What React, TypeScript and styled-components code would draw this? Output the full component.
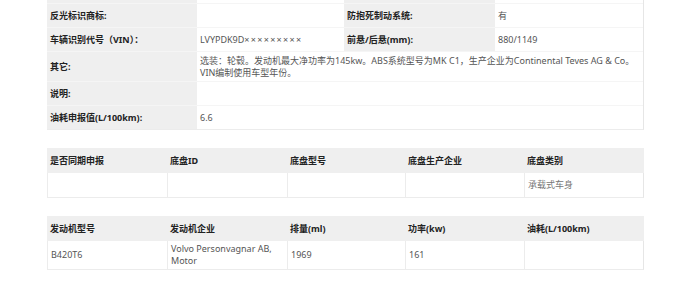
import React from "react";
import styled, { createGlobalStyle } from "styled-components";

const GlobalStyle = createGlobalStyle`
  html, body {
    margin: 0;
    padding: 0;
    background: #ffffff;
  }
  body {
    font-family: "Noto Sans", "Noto Sans CJK SC", sans-serif;
    font-size: 9px;
    color: #555;
  }
`;

type Pair = { label: string; value: React.ReactNode };
type SpecRowData = { cells: Pair[]; tall?: boolean; span?: boolean };

const getSpecRows = (): SpecRowData[] => [
    { cells: [{ label: "反光标识商标:", value: "" }, { label: "防抱死制动系统:", value: "有" }] },
    { cells: [{ label: "车辆识别代号（VIN）：", value: (<>LVYPDK9D<Masked>×××××××××</Masked></>) }, { label: "前悬/后悬(mm):", value: "880/1149" }] },
    {
        cells: [{
            label: "其它:",
            value: (<>选装：轮毂。发动机最大净功率为145kw。ABS系统型号为MK C1，生产企业为Continental Teves AG &amp; Co。<br />VIN编制使用车型年份。</>),
        }],
        tall: true,
        span: true,
    },
    { cells: [{ label: "说明:", value: "" }], span: true },
    { cells: [{ label: "油耗申报值(L/100km):", value: "6.6" }], span: true },
];

const chassis = {
    head: ["是否同期申报", "底盘ID", "底盘型号", "底盘生产企业", "底盘类别"],
    body: ["", "", "", "", "承载式车身"],
};

const engine = {
    head: ["发动机型号", "发动机企业", "排量(ml)", "功率(kw)", "油耗(L/100km)"],
    body: ["B420T6", "Volvo Personvagnar AB,\nMotor", "1969", "161", ""],
};

const App = () => {
    const specRows = getSpecRows();
    return (
        <>
            <GlobalStyle />
            <Page>
                <SpecTable>
                    {/* row scrolled mostly out of view */}
                    <SpecRow>
                        <Label />
                        <Value />
                        <Label />
                        <Value />
                    </SpecRow>
                    {specRows.map((row, i) => (
                        <SpecRow key={i} $tall={row.tall}>
                            {row.cells.map((c, j) => (
                                <React.Fragment key={j}>
                                    <Label>{c.label}</Label>
                                    <Value $span={row.span}>{c.value}</Value>
                                </React.Fragment>
                            ))}
                        </SpecRow>
                    ))}
                </SpecTable>

                <GridTable>
                    {chassis.head.map((h) => (<HeadCell key={h}>{h}</HeadCell>))}
                    {chassis.body.map((b, i) => (<BodyCell key={i} $h={24} $muted={i === 4}>{b}</BodyCell>))}
                </GridTable>

                <GridTable>
                    {engine.head.map((h) => (<HeadCell key={h}>{h}</HeadCell>))}
                    {engine.body.map((b, i) => (<BodyCell key={i} $h={28}>{b}</BodyCell>))}
                </GridTable>
            </Page>
        </>
    );
};

const Page = styled('div')`
  width: 597px;
  margin-left: 47px;
  margin-top: -20px;
  display: flex;
  flex-direction: column;
  gap: 18px;
`

const SpecTable = styled('div')`
  display: flex;
  flex-direction: column;
  border-right: 1px solid #e6e6e6;
  border-bottom: 1px solid #ececec;
`

const SpecRow = styled('div')<{ $tall?: boolean }>`
  display: grid;
  grid-template-columns: 150px 147px 151px 148px;
  height: ${(p) => (p.$tall ? "29px" : "23px")};
  border-bottom: 1px solid #f5f5f5;
  &:last-child {
    border-bottom: none;
  }
`

const Label = styled('div')`
  display: flex;
  align-items: center;
  padding-left: 3px;
  background: #efefef;
  color: #222;
  font-weight: 700;
  white-space: nowrap;
`

const Value = styled('div')<{ $span?: boolean }>`
  display: flex;
  align-items: center;
  padding-left: 3px;
  background: #fff;
  color: #555;
  line-height: 12px;
  white-space: nowrap;
  grid-column: ${(p) => (p.$span ? "2 / 5" : "auto")};
`

const Masked = styled('span')`
  letter-spacing: 1.3px;
`

const GridTable = styled('div')`
  display: grid;
  grid-template-columns: 120px 120px 118px 119px 120px;
  border-right: 1px solid #e6e6e6;
  border-bottom: 1px solid #ececec;
`

const HeadCell = styled('div')`
  display: flex;
  align-items: center;
  height: 25px;
  padding-left: 3px;
  background: #efefef;
  color: #222;
  font-weight: 700;
  white-space: nowrap;
`

const BodyCell = styled('div')<{ $muted?: boolean; $h: number }>`
  display: flex;
  align-items: center;
  height: ${(p) => p.$h}px;
  padding-left: 3px;
  border-left: 1px solid #ececec;
  color: ${(p) => (p.$muted ? "#777" : "#555")};
  line-height: 12px;
  white-space: pre;
`

export default App;
